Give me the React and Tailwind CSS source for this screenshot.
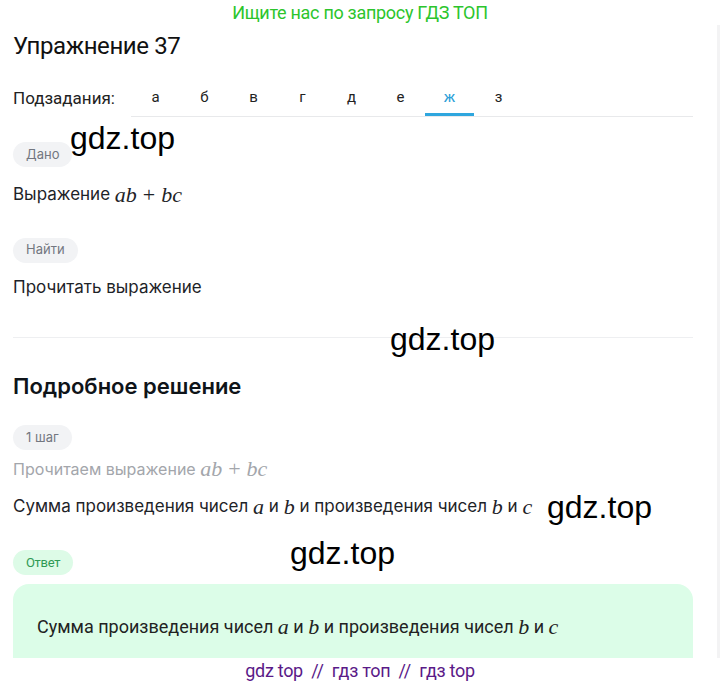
import React from 'react';

const M = ({ children }) => (
  <span className="font-['Liberation_Serif',serif] italic text-[22px]">{children}</span>
);

const Plus = () => <span className="font-['Liberation_Serif',serif] text-[22px] mx-[6px]">+</span>;

const Pill = ({ children, green }) => (
  <div
    className={`inline-flex items-center h-[25px] px-[13px] rounded-full text-[13px] ${
      green ? "bg-[#ddfbe7] text-[#2f9a55] font-['Roboto',sans-serif] tracking-tight" : 'bg-[#f2f3f5] text-[#737780]'
    }`}
  >
    {children}
  </div>
);

const Mark = ({ className }) => (
  <div className={`absolute font-['Liberation_Sans',sans-serif] text-[32px] leading-none text-black ${className}`}>
    gdz.top
  </div>
);

const tabs = ['а', 'б', 'в', 'г', 'д', 'е', 'ж', 'з'];

export default function App() {
  return (
    <div className="relative w-[720px] h-[685px] overflow-hidden bg-white font-['Inter',sans-serif] text-[#1e2328]">
      {/* banner */}
      <div className="h-[25px] flex items-center justify-center font-['Roboto',sans-serif] text-[18px] tracking-[-0.3px] text-[#2cc52c]">
        Ищите нас по запросу ГДЗ ТОП
      </div>

      <div className="flex">
        <div className="w-[717px] pl-[13px] pr-[24px]">
          <h1 className="mt-[6px] h-[30px] flex items-center font-['Roboto',sans-serif] text-[24px] tracking-[-0.4px] text-[#111]">
            Упражнение 37
          </h1>

          {/* subtasks */}
          <div className="mt-[18px] flex items-end">
            <div className="w-[118px] pb-[6px] font-['Roboto',sans-serif] text-[17px] text-[#222]">Подзадания:</div>
            <div className="flex-1 flex border-b border-[#e8e9eb] font-['Roboto',sans-serif] text-[15px] text-[#222]">
              {tabs.map((t) => (
                <div
                  key={t}
                  className={`w-[49px] h-[37px] flex items-center justify-center ${
                    t === 'ж' ? 'text-[#2e9fd8] border-b-[3px] border-[#2ea6de] -mb-px pt-[3px]' : ''
                  }`}
                >
                  {t}
                </div>
              ))}
              <div className="flex-1" />
            </div>
          </div>

          <div className="mt-[24px]">
            <Pill>Дано</Pill>
          </div>
          <div className="mt-[13px] text-[17px] h-[28px] flex items-center">
            Выражение&nbsp;<M>ab</M>
            <Plus />
            <M>bc</M>
          </div>

          <div className="mt-[28px]">
            <Pill>Найти</Pill>
          </div>
          <div className="mt-[11px] text-[17px] h-[28px] flex items-center">Прочитать выражение</div>

          <div className="mt-[35px] border-t border-[#eeeff1]" />

          <h2 className="mt-[34px] h-[30px] flex items-center text-[22px] font-semibold text-[#0f1419]">
            Подробное решение
          </h2>

          <div className="mt-[22px]">
            <Pill>1 шаг</Pill>
          </div>
          <div className="mt-[6px] h-[26px] flex items-center text-[16px] text-[#a3a6ab]">
            Прочитаем выражение&nbsp;<M>ab</M>
            <Plus />
            <M>bc</M>
          </div>

          <div className="mt-[11px] h-[28px] flex items-center text-[17px]">
            Сумма произведения чисел&nbsp;<M>a</M>&nbsp;и&nbsp;<M>b</M>&nbsp;и произведения чисел&nbsp;<M>b</M>&nbsp;и&nbsp;
            <M>c</M>
          </div>

          <div className="mt-[28px]">
            <Pill green>Ответ</Pill>
          </div>

          <div className="mt-[9px] h-[80px] rounded-t-[16px] bg-[#dcfde8] pl-[24px] pt-[28px] font-['Roboto',sans-serif] text-[18px] text-[#222]">
            <div className="h-[28px] flex items-center">
              Сумма произведения чисел&nbsp;<M>a</M>&nbsp;и&nbsp;<M>b</M>&nbsp;и произведения чисел&nbsp;<M>b</M>&nbsp;и&nbsp;
              <M>c</M>
            </div>
          </div>
        </div>
        <div className="w-[3px] h-[633px] bg-[#f3f3f4]" />
      </div>

      {/* footer */}
      <div className="absolute left-0 right-0 top-[658px] h-[25px] bg-white flex items-center justify-center font-['Roboto',sans-serif] text-[18px] tracking-[-0.3px] text-[#5a1a88]">
        gdz top&nbsp;&nbsp;//&nbsp;&nbsp;гдз топ&nbsp;&nbsp;//&nbsp;&nbsp;гдз top
      </div>

      {/* watermarks */}
      <Mark className="left-[70px] top-[122px]" />
      <Mark className="left-[390px] top-[323px]" />
      <Mark className="left-[547px] top-[491px]" />
      <Mark className="left-[290px] top-[537px]" />
    </div>
  );
}
